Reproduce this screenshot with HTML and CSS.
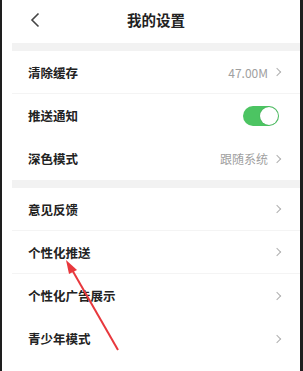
FILE: index.html
```html
<!DOCTYPE html>
<html lang="zh-CN">
<head>
    <meta charset="UTF-8">
    <meta name="viewport" content="width=device-width, initial-scale=1.0">
    <title>我的设置</title>
    <link rel="stylesheet" href="styles.css">
</head>
<body>
    <div class="page">
        <div class="header">
            <svg class="back" width="10" height="16" viewBox="0 0 10 16">
                <path d="M8.5 1.5 L2 8 L8.5 14.5" fill="none" stroke="#444" stroke-width="1.6"/>
            </svg>
            <div class="title">我的设置</div>
        </div>

        <div class="gap-bar"></div>

        <div class="row line">
            <span class="label">清除缓存</span>
            <span class="value">47.00M <i class="chev"></i></span>
        </div>
        <div class="row">
            <span class="label">推送通知</span>
            <span class="switch on"><span class="knob"></span></span>
        </div>
        <div class="row">
            <span class="label">深色模式</span>
            <span class="value">跟随系统 <i class="chev"></i></span>
        </div>

        <div class="gap-bar"></div>

        <div class="row line">
            <span class="label">意见反馈</span>
            <span class="value"><i class="chev"></i></span>
        </div>
        <div class="row line">
            <span class="label">个性化推送</span>
            <span class="value"><i class="chev"></i></span>
        </div>
        <div class="row">
            <span class="label">个性化广告展示</span>
            <span class="value"><i class="chev"></i></span>
        </div>
        <div class="row">
            <span class="label">青少年模式</span>
            <span class="value"><i class="chev"></i></span>
        </div>

        <!-- red annotation arrow -->
        <svg class="arrow" width="303" height="371" viewBox="0 0 303 371">
            <line x1="118" y1="350" x2="71" y2="268" stroke="#e8383d" stroke-width="2"/>
            <path d="M66 260 L77 270 L69 274 Z" fill="#e8383d"/>
        </svg>
    </div>
</body>
</html>
```

FILE: styles.css
```css
body {
    margin: 0;
    background-color: #ffffff;
    font-family: "Noto Sans CJK SC", "Noto Sans", sans-serif;
    overflow: hidden;
}
.page {
    position: relative;
    width: 303px;
    height: 371px;
    box-sizing: border-box;
    border-left: 2px solid #1e1e1e;
    border-right: 3px solid #1e1e1e;
    padding-left: 10px;
    background-color: #ffffff;
}
.header {
    position: relative;
    height: 43px;
    display: flex;
    align-items: center;
    justify-content: center;
}
.back {
    position: absolute;
    left: 18px;
    top: 12px;
}
.title {
    font-size: 14.5px;
    font-weight: 600;
    color: #222;
    margin-top: -4px;
}
.gap-bar {
    height: 8px;
    background-color: #f2f2f2;
}
.row {
    height: 43px;
    display: flex;
    align-items: center;
    justify-content: space-between;
    padding: 0 18px 0 16px;
    box-sizing: border-box;
}
.row.line {
    border-bottom: 1px solid #f4f4f4;
}
.label {
    font-size: 12.5px;
    font-weight: 600;
    color: #222;
}
.value {
    display: flex;
    align-items: center;
    gap: 6px;
    font-size: 12px;
    color: #a0a0a0;
}
.chev {
    display: inline-block;
    width: 5px;
    height: 5px;
    border-top: 1.3px solid #b0b0b0;
    border-right: 1.3px solid #b0b0b0;
    transform: rotate(45deg);
    margin-right: 2px;
}
.switch {
    width: 36px;
    height: 20px;
    border-radius: 10px;
    background-color: #4cc462;
    position: relative;
    margin-right: 3px;
}
.switch .knob {
    position: absolute;
    right: 1px;
    top: 1px;
    width: 18px;
    height: 18px;
    border-radius: 50%;
    background-color: #ffffff;
    box-shadow: 0 0 1px rgba(0, 0, 0, 0.3);
}
.arrow {
    position: absolute;
    left: -2px;
    top: 0;
    pointer-events: none;
}
```
